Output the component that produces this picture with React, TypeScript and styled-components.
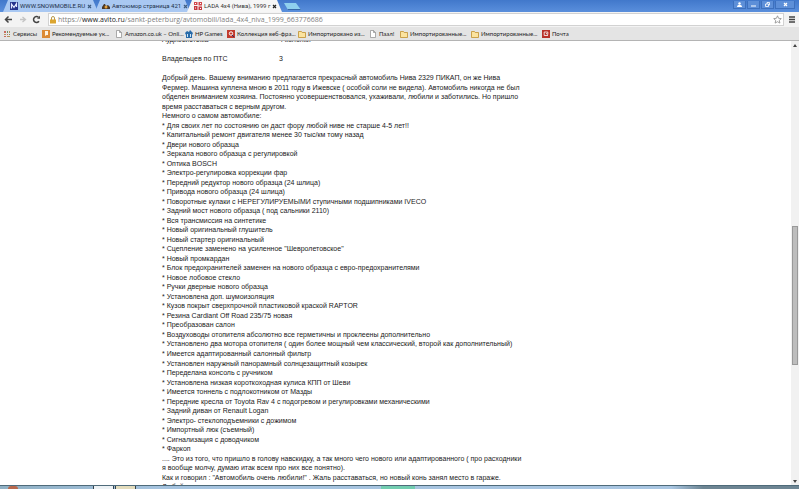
import React from "react";
import styled, { createGlobalStyle } from "styled-components";

const GlobalStyle = createGlobalStyle`
  * { box-sizing: border-box; }
  body { margin: 0; background: #fff; font-family: "Liberation Sans", Arial, sans-serif; }
  button, input { font: inherit; color: inherit; border: 0; padding: 0; margin: 0; background: none; }
  a { color: inherit; text-decoration: none; }
  svg { display: block; flex: none; }
`;

const Shell = styled.div`
  display: flex;
  flex-direction: column;
  height: 100vh;
  overflow: hidden;
`;

const TabStrip = styled.header`
  display: flex;
  flex: none;
  height: 12px;
  padding-left: 3px;
  background: linear-gradient(#4178cb, #5a8fdc);
`;

const Tabs = styled.nav`
  display: flex;
  align-items: stretch;
`;

const Tab = styled.div<{ $active?: boolean }>`
  display: flex;
  align-items: center;
  width: 95px;
  margin-right: -3px;
  padding: 0 6px 0 7px;
  gap: 2px;
  color: ${(p) => (p.$active ? "#333" : "#1c3048")};
  background: ${(p) => (p.$active ? "#f6f6f6" : "#a9c8f2")};
  clip-path: polygon(0 100%, 5px 0, calc(100% - 5px) 0, 100% 100%);
  font-family: Roboto, sans-serif;
  font-size: 6px;
  line-height: 12px;
`;

const TabTitle = styled.button`
  flex: 1;
  white-space: nowrap;
  text-align: left;
`;

const CloseButton = styled.button`
  display: flex;
`;

const NewTab = styled.button`
  width: 17px;
  height: 7px;
  margin: 3px 0 0 5px;
  background: #8fd0ee;
  border-bottom: 1px solid #3568a8;
  clip-path: polygon(0 0, 12px 0, 100% 100%, 4px 100%);
`;

const WindowControls = styled.div`
  display: flex;
  align-items: center;
  gap: 1px;
  height: 9px;
  margin: 0 4px 0 auto;
`;

const WindowButton = styled.button<{ $wide?: boolean }>`
  display: flex;
  align-items: center;
  justify-content: center;
  width: ${(p) => (p.$wide ? 20 : 13)}px;
  height: 8px;
  border: 1px solid #3d70bd;
  border-top: 0;
  background: #5d8fd8;
`;

const Toolbar = styled.div`
  display: flex;
  flex: none;
  align-items: center;
  gap: 5px;
  height: 15px;
  padding: 0 4px;
  background: #f3f3f3;
`;

const ToolButton = styled.button`
  display: flex;
  flex: none;
`;

const AddressBar = styled.label`
  display: flex;
  flex: 1;
  align-items: center;
  height: 13px;
  padding: 0 1px;
  margin-left: 2px;
  border: 1px solid #d2d2d2;
  background: #fff;
  color: #808080;
  font-family: "Open Sans", sans-serif;
  font-size: 7px;
  line-height: 11px;
`;

const Scheme = styled.span`
  margin-left: 2px;
`;

const Host = styled.span`
  color: #222;
`;

const PathInput = styled.input`
  flex: 1;
  min-width: 0;
  height: 11px;
  outline: 0;
`;

const Bookmarks = styled.nav`
  display: flex;
  flex: none;
  align-items: center;
  gap: 6px;
  height: 14px;
  padding: 0 3px;
  border-bottom: 1px solid #b4b4b4;
  background: #e4e4e4;
  color: #1c1c1c;
  font-family: Lato, sans-serif;
  font-size: 6px;
  line-height: 12px;
`;

const Bookmark = styled.a`
  display: flex;
  flex: none;
  align-items: center;
  gap: 2px;
  white-space: nowrap;
`;

const BookmarkText = styled.span<{ $width: number }>`
  width: ${(p) => p.$width}px;
`;

const Viewport = styled.div`
  display: flex;
  flex: 1;
  min-height: 0;
`;

const Page = styled.main`
  flex: 1;
  min-width: 0;
  padding-left: 162px;
  overflow: hidden;
  color: #1a1a1a;
  font-size: 7px;
  line-height: 1.36;
`;

const Specs = styled.dl`
  display: grid;
  grid-template-columns: 117px 1fr;
  row-gap: 9px;
  margin: -6px 0 10px;
`;

const Term = styled.dt``;

const Value = styled.dd`
  margin: 0;
`;

const Paragraph = styled.p`
  margin: 0;
  white-space: pre;
`;

const Features = styled.ul`
  margin: 0;
  padding: 0;
  list-style: none;
`;

const Feature = styled.li`
  white-space: pre;
`;

const Scrollbar = styled.div`
  display: flex;
  flex: none;
  flex-direction: column;
  justify-content: space-between;
  align-items: center;
  width: 8px;
  padding: 3px 0 2px;
  background: #f1f1f1;
`;

const Track = styled.div`
  display: grid;
  grid-template-rows: 180fr 139fr 116fr;
  flex: 1;
  width: 6px;
`;

const Thumb = styled.div`
  grid-row: 2;
  border: 1px solid #999;
  background: #bdbdbd;
`;

const Taskbar = styled.footer`
  display: flex;
  flex: none;
  height: 4px;
  padding-left: 8px;
  border-top: 1px solid #4f6b7a;
  background: linear-gradient(90deg, #8fb0c4, #a5c3df 20%, #a9c6e2 84%, #6d8593 88%, #6d8593);
`;

const StartButton = styled.button`
  width: 10px;
  height: 3px;
  border-radius: 5px 5px 0 0;
  background: #b8684c;
`;

const TaskButton = styled.button<{ $first?: boolean }>`
  width: 21px;
  height: 3px;
  margin-left: ${(p) => (p.$first ? 75 : 1)}px;
  border: 1px solid #33434e;
  border-width: 0 1px;
  background: ${(p) => (p.$first ? "#edf2f5" : "#e3dcbc")};
`;

const Progress = styled.div`
  width: 34px;
  height: 3px;
  margin-left: 245px;
  background: #72cdb0;
`;

const Cross = ({ color = "#333" }: { color?: string }) => (
  <svg width="5" height="5" viewBox="0 0 5 5" stroke={color} strokeWidth="1.2">
    <path d="M1 1l3 3M4 1L1 4" />
  </svg>
);

const TabIcon = ({ kind }: { kind: string }) => (
  <svg width="8" height="8" viewBox="0 0 8 8">
    {kind === "snow" && (
      <>
        <rect width="8" height="8" fill="#25328c" />
        <path d="M1.5 6.500V2l2.500 3.500L6.500 1.500V5" fill="none" stroke="#e4e9ff" strokeWidth="1.200" />
      </>
    )}
    {kind === "auto" && (
      <>
        <path d="M0 5l2-3h1l1 2 2-1 2 2v2H0z" fill="#4a3828" />
        <circle cx="4" cy="5" r="1.500" fill="#e8a33c" />
      </>
    )}
    {kind === "avito" && (
      <>
        <path d="M0 0h3.500v3H0zM4.500 0H8v3.500H4.500z" fill="#d2484b" />
        <path d="M0 4h3.500v4H0zM4.500 4.500H8V8H4.500z" fill="#c5383e" />
        <path d="M1 1h1v1H1zM6 1h1v1H6zM1 5.500h1v1H1zM6 6h1v1H6z" fill="#fff" />
      </>
    )}
  </svg>
);

const BookmarkIcon = ({ kind }: { kind: string }) => (
  <svg width="8" height="8" viewBox="0 0 8 8">
    {kind === "apps" && (
      <>
        <path d="M1 1h2v2H1zM4 4h1v1H4zM1 6h2v1H1z" fill="#c86b5e" />
        <path d="M4 1h1v2H4zM6 4h1v1H6z" fill="#6d8f62" />
        <path d="M6 1h1v2H6zM1 4h2v1H1zM4 6h3v1H4z" fill="#b5935c" />
      </>
    )}
    {kind === "star" && (
      <>
        <rect width="8" height="8" fill="#dc8a34" />
        <path d="M3 1h3v4H4.500L3 6z" fill="#fff3df" />
      </>
    )}
    {kind === "page" && <path d="M1.500.5h3l2 2v5h-5zM4.500.5v2h2" fill="#fff" stroke="#8b8b8b" strokeWidth=".7" />}
    {kind === "games" && (
      <>
        <path d="M0 3l2-2 2 1 1-2 3 3-1 2v3H1V5z" fill="#286ba9" />
        <path d="M2 4h1v3H2zM5 4h1v3H5z" fill="#cfe5f5" />
      </>
    )}
    {kind === "web" && (
      <>
        <rect width="8" height="8" fill="#c23a2c" />
        <circle cx="4" cy="3.500" r="1.700" fill="none" stroke="#fff" />
        <path d="M5 5l2 2" stroke="#2c2c6c" />
      </>
    )}
    {kind === "folder" && (
      <path d="M.5 1.500h3l.7 1h3.300v5h-7z" fill="#fbe39f" stroke="#c08f2d" strokeWidth=".8" />
    )}
    {kind === "mail" && (
      <>
        <rect width="8" height="8" fill="#b8322a" />
        <path d="M6 5.500H2.200V2h3.600v2.500L4 3.300" fill="none" stroke="#fff" strokeWidth=".8" />
      </>
    )}
  </svg>
);

const tabs = [
  { icon: "snow", title: "WWW.SNOWMOBILE.RU" },
  { icon: "auto", title: "Автоюмор страница 421" },
  { icon: "avito", title: "LADA 4x4 (Нива), 1999 г", active: true },
];

const bookmarks = [
  { icon: "apps", text: "Сервисы", width: 23 },
  { icon: "star", text: "Рекомендуемые ук...", width: 57 },
  { icon: "page", text: "Amazon.co.uk – Onli...", width: 54 },
  { icon: "games", text: "HP Games", width: 26 },
  { icon: "web", text: "Коллекция веб-фра...", width: 55 },
  { icon: "folder", text: "Импортировано из...", width: 55 },
  { icon: "page", text: "Паал!", width: 15 },
  { icon: "folder", text: "Импортированные...", width: 55 },
  { icon: "folder", text: "Импортированные...", width: 55 },
  { icon: "mail", text: "Почта", width: 17 },
];

const intro = `Добрый день. Вашему вниманию предлагается прекрасный автомобиль Нива 2329 ПИКАП, он же Нива
Фермер. Машина куплена мною в 2011 году в Ижевске ( особой соли не видела). Автомобиль никогда не был
обделен вниманием хозяина. Постоянно усовершенствовался, ухаживали, любили и заботились. Но пришло
время расставаться с верным другом.
Немного о самом автомобиле:`;

const features = [
  "Для своих лет по состоянию он даст фору любой ниве не старше 4-5 лет!!",
  "Капитальный ремонт двигателя менее 30 тыс/км тому назад",
  "Двери нового образца",
  "Зеркала нового образца с регулировкой",
  "Оптика BOSCH",
  "Электро-регулировка коррекции фар",
  "Передний редуктор нового образца (24 шлица)",
  "Привода нового образца (24 шлица)",
  "Поворотные кулаки с НЕРЕГУЛИРУЕМЫМИ ступичными подшипниками IVECO",
  "Задний мост нового образца ( под сальники 2110)",
  "Вся трансмиссия на синтетике",
  "Новый оригинальный глушитель",
  "Новый стартер оригинальный",
  'Сцепление заменено на усиленное "Шевролетовское"',
  "Новый промкардан",
  "Блок предохранителей заменен на нового образца с евро-предохранителями",
  "Новое лобовое стекло",
  "Ручки дверные нового образца",
  "Установлена доп. шумоизоляция",
  "Кузов покрыт сверхпрочной пластиковой краской RAPTOR",
  "Резина Cardiant Off Road 235/75 новая",
  "Преобразован салон",
  "Воздуховоды отопителя абсолютно все герметичны и проклеены дополнительно",
  "Установлено два мотора отопителя ( один более мощный чем классический, второй как дополнительный)",
  "Имеется адаптированный салонный фильтр",
  "Установлен наружный панорамный солнцезащитный козырек",
  "Переделана консоль с ручником",
  "Установлена низкая короткоходная кулиса КПП от Шеви",
  "Имеется тоннель с подлокотником от Мазды",
  "Передние кресла от Toyota Rav 4 с подогревом и регулировками механическими",
  "Задний диван от Renault Logan",
  "Электро- стеклоподъемники с дожимом",
  "Импортный люк (съемный)",
  "Сигнализация с доводчиком",
  "Фаркоп",
];

const closing = `.... Это из того, что пришло в голову навскидку, а так много чего нового или адаптированного ( про расходники
я вообще молчу, думаю итак всем про них все понятно).
Как и говорил : "Автомобиль очень любили!" . Жаль расставаться, но новый конь занял место в гараже.
Любой осмотр и проверка, торг возможен только у капота.`;

export default function App() {
  return (
    <Shell>
      <GlobalStyle />
      <TabStrip>
        <Tabs aria-label="Вкладки">
          {tabs.map((t) => (
            <Tab key={t.title} $active={t.active}>
              <TabIcon kind={t.icon} />
              <TabTitle>{t.title}</TabTitle>
              <CloseButton aria-label="Закрыть вкладку">
                <Cross color={t.active ? "#222" : "#3f5d80"} />
              </CloseButton>
            </Tab>
          ))}
        </Tabs>
        <NewTab aria-label="Новая вкладка" />
        <WindowControls>
          <WindowButton aria-label="Профиль">
            <svg width="5" height="5" viewBox="0 0 5 5" fill="#fff">
              <circle cx="2.500" cy="1.500" r="1.200" />
              <path d="M0 5c0-3 5-3 5 0z" />
            </svg>
          </WindowButton>
          <WindowButton aria-label="Свернуть">
            <svg width="5" height="5" viewBox="0 0 5 5"><path d="M0 4h5" stroke="#fff" /></svg>
          </WindowButton>
          <WindowButton aria-label="Восстановить">
            <svg width="5" height="5" viewBox="0 0 5 5" fill="none" stroke="#fff" strokeWidth=".8">
              <path d="M.5 2h3v2.500h-3zM2 2V.5h2.500v2.500h-1" />
            </svg>
          </WindowButton>
          <WindowButton $wide aria-label="Закрыть"><Cross color="#fff" /></WindowButton>
        </WindowControls>
      </TabStrip>

      <Toolbar>
        <ToolButton aria-label="Назад">
          <svg width="9" height="9" viewBox="0 0 9 9" fill="none" stroke="#444" strokeWidth="1.500">
            <path d="M8 4.500H2M4.500 1.500l-3 3 3 3" />
          </svg>
        </ToolButton>
        <ToolButton aria-label="Вперёд">
          <svg width="9" height="9" viewBox="0 0 9 9" fill="none" stroke="#c4c4c4" strokeWidth="1.300">
            <path d="M2 4.500h5M4.500 2l3 2.500-3 2.500" />
          </svg>
        </ToolButton>
        <ToolButton aria-label="Обновить">
          <svg width="9" height="9" viewBox="0 0 9 9" fill="none" stroke="#444" strokeWidth="1.500">
            <path d="M7 6.300A3 3 0 1 1 6.500 2.300" />
            <path d="M5 3.700h3V.8z" fill="#444" stroke="none" />
          </svg>
        </ToolButton>
        <AddressBar>
          <svg width="6" height="8" viewBox="0 0 6 8">
            <path d="M1.500 4V2a1.500 1.500 0 0 1 3 0v2" fill="none" stroke="#b99a4b" />
            <rect y="3.500" width="6" height="4" fill="#dba52f" />
          </svg>
          <Scheme>https://</Scheme>
          <Host>www.avito.ru</Host>
          <PathInput
            aria-label="Адрес страницы"
            defaultValue="/sankt-peterburg/avtomobili/lada_4x4_niva_1999_663776686"
          />
          <svg width="9" height="9" viewBox="0 0 9 9" fill="#fff" stroke="#8a8a8a" strokeWidth=".8">
            <path d="M4.500.8l1.100 2.500 2.700.3-2 1.800.6 2.700-2.400-1.400-2.400 1.400.6-2.700-2-1.800 2.700-.3z" />
          </svg>
        </AddressBar>
        <ToolButton aria-label="Меню">
          <svg width="6" height="7" viewBox="0 0 6 7" stroke="#444" strokeWidth="1.300">
            <path d="M0 1h6M0 3.500h6M0 6h6" />
          </svg>
        </ToolButton>
      </Toolbar>

      <Bookmarks aria-label="Закладки">
        {bookmarks.map((b, i) => (
          <Bookmark key={i} href="#">
            <BookmarkIcon kind={b.icon} />
            <BookmarkText $width={b.width}>{b.text}</BookmarkText>
          </Bookmark>
        ))}
      </Bookmarks>

      <Viewport>
        <Page>
          <Specs>
            <Term>Аудиосистема</Term>
            <Value>4 колонки</Value>
            <Term>Владельцев по ПТС</Term>
            <Value>3</Value>
          </Specs>
          <Paragraph>{intro}</Paragraph>
          <Features>
            {features.map((f) => (
              <Feature key={f}>* {f}</Feature>
            ))}
          </Features>
          <Paragraph>{closing}</Paragraph>
        </Page>
        <Scrollbar>
          <svg width="4" height="3" viewBox="0 0 4 3"><path d="M0 3l2-3 2 3z" fill="#444" /></svg>
          <Track><Thumb /></Track>
          <svg width="4" height="3" viewBox="0 0 4 3"><path d="M0 0l2 3 2-3z" fill="#444" /></svg>
        </Scrollbar>
      </Viewport>

      <Taskbar>
        <StartButton aria-label="Пуск" />
        <TaskButton $first aria-label="Окно браузера" />
        <TaskButton aria-label="Папка" />
        <Progress />
      </Taskbar>
    </Shell>
  );
}
